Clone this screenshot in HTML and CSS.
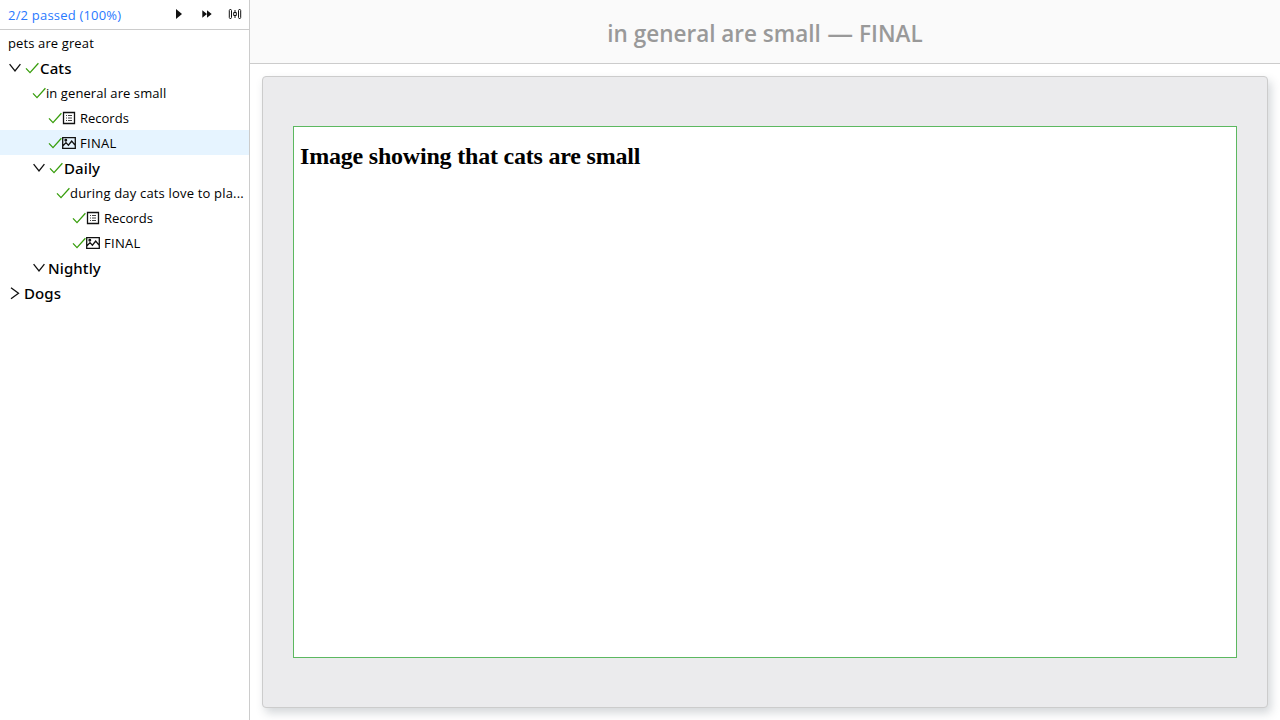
FILE: index.html
```html
<!DOCTYPE html>
<html lang="en">
<head>
<meta charset="utf-8">
<title>Test results</title>
<link rel="stylesheet" href="styles.css">
</head>
<body>
<svg class="defs" width="0" height="0">
  <symbol id="check" viewBox="0 0 14 14"><path d="M1 7.4 5 11.6 13.4 2.2"/></symbol>
  <symbol id="down" viewBox="0 0 14 14"><path d="M1.6 3.2 7 10l5.400-6.800"/></symbol>
  <symbol id="right" viewBox="0 0 14 14"><path d="m3 1.700 7.500 5.500L3 12.700"/></symbol>
  <symbol id="records" viewBox="0 0 14 14"><path d="M1.500 1.500h11v11h-11z"/><path class="lines" d="M4 4.500h1m1 0h4M4 7h1m1 0h4M4 9.500h1m1 0h4"/></symbol>
  <symbol id="image" viewBox="0 0 14 14"><path d="M.7 1.700h12.600v10.600H.7zM1 9.800l3-3.200 2.400 2.600L9.700 5 13 9.200"/><circle cx="3.800" cy="4.300" r=".8"/></symbol>
</svg>
<div class="app">
  <aside class="sidebar">
    <header class="toolbar">
      <span class="status">2/2 passed (100%)</span>
      <div class="actions">
        <svg width="14" height="14" viewBox="0 0 14 14"><path class="solid" d="M4 2l6 5L4 12z"/></svg>
        <svg width="14" height="14" viewBox="0 0 14 14"><path class="solid" d="M2.300 3.200 7 7l-4.700 3.800zM7 3.200 11.700 7 7 10.800z"/></svg>
        <svg class="levels" width="14" height="14" viewBox="0 0 14 14"><path d="M1.300 3.500 2.400 2l1.100 1.500v7L2.400 12l-1.100-1.500zM10.500 3.500 11.600 2l1.100 1.500v7L11.600 12l-1.100-1.500zM7 3v2M7 9v2M5.700 5.500h2.600v3H5.700z"/></svg>
      </div>
    </header>
    <nav class="tree">
      <div class="row root"><span class="label great">pets are great</span></div>
      <div class="row group"><svg class="arrow"><use href="#down"/></svg><svg class="ok"><use href="#check"/></svg><span class="label">Cats</span></div>
      <div class="row test"><svg class="ok"><use href="#check"/></svg><span class="label general">in general are small</span></div>
      <div class="row step"><svg class="ok"><use href="#check"/></svg><svg class="kind"><use href="#records"/></svg><span class="label">Records</span></div>
      <div class="row step selected"><svg class="ok"><use href="#check"/></svg><svg class="kind"><use href="#image"/></svg><span class="label final">FINAL</span></div>
      <div class="row group nested"><svg class="arrow"><use href="#down"/></svg><svg class="ok"><use href="#check"/></svg><span class="label">Daily</span></div>
      <div class="row test nested"><svg class="ok"><use href="#check"/></svg><span class="label during">during day cats love to pla...</span></div>
      <div class="row step nested"><svg class="ok"><use href="#check"/></svg><svg class="kind"><use href="#records"/></svg><span class="label">Records</span></div>
      <div class="row step nested"><svg class="ok"><use href="#check"/></svg><svg class="kind"><use href="#image"/></svg><span class="label final">FINAL</span></div>
      <div class="row group nested"><svg class="arrow"><use href="#down"/></svg><span class="label">Nightly</span></div>
      <div class="row group"><svg class="arrow"><use href="#right"/></svg><span class="label">Dogs</span></div>
    </nav>
  </aside>
  <main class="main">
    <header class="title"><span>in general are small <span class="dash">—</span> FINAL</span></header>
    <section class="card"><div class="shot"><h2>Image showing that cats are small</h2></div></section>
  </main>
</div>
</body>
</html>
```
FILE: styles.css
```css
* { box-sizing: border-box; }
body { margin: 0; font-family: "Open Sans", "Noto Sans", sans-serif; color: #000; background: #fff; }
.defs { position: absolute; }
.app { display: flex; width: 1280px; height: 720px; overflow: hidden; }
.sidebar { width: 250px; flex: none; border-right: 1px solid #ccc; }
.toolbar { height: 30px; border-bottom: 1px solid #ccc; display: flex; align-items: center; justify-content: space-between; padding: 0 7px 0 8px; }
.status { color: #2979ff; font-size: 13px; line-height: 20px; letter-spacing: .2px; white-space: nowrap; }
.actions { display: flex; gap: 14px; padding-bottom: 1px; }
svg { display: block; flex: none; fill: none; stroke: #111; stroke-width: 1.3; }
.solid { fill: #111; stroke: none; }
.levels { stroke-width: 1; }
.lines { stroke-width: .8; }
.row { height: 25px; display: flex; align-items: center; font-size: 13px; line-height: 25px; white-space: nowrap; padding-left: 8px; }
.row svg { width: 14px; height: 14px; }
.label { padding-top: 2px; }
.great { letter-spacing: .12px; }
.general { letter-spacing: .08px; }
.during { letter-spacing: .18px; }
.final { letter-spacing: .3px; }
.arrow { margin-right: 2px; }
.arrow + .ok { margin-left: 1px; margin-right: 1px; }
.row .ok { stroke: #389e0d; }
.kind { margin-right: 4px; }
.group { font-family: "Noto Sans", sans-serif; font-size: 15px; font-weight: 500; letter-spacing: .1px; }
.group.nested { padding-left: 32px; }
.test { padding-left: 32px; }
.test.nested { padding-left: 56px; }
.step { padding-left: 48px; }
.step.nested { padding-left: 72px; }
.selected { background: #e6f4ff; }
.main { flex: 1; min-width: 0; display: flex; flex-direction: column; }
.title { height: 64px; flex: none; background: #fafafa; border-bottom: 1px solid #ccc; display: flex; align-items: center; justify-content: center; color: #999; font-size: 22.5px; font-weight: 600; padding-top: 4px; white-space: nowrap; }
.dash { display: inline-block; transform: scaleX(1.15); margin: 0 2px; }
.card { flex: 1; margin: 12px; border: 1px solid #ccc; border-radius: 4px; background: #ebebed; padding: 49px 30px; box-shadow: 3px 5px 10px rgba(60, 75, 85, .22); display: flex; }
.shot { flex: 1; border: 1px solid #5cb860; background: #fff; padding: 15px 6px; }
.shot h2 { margin: 0; font: bold 24px/28px "Liberation Serif", serif; letter-spacing: -.2px; }
```
